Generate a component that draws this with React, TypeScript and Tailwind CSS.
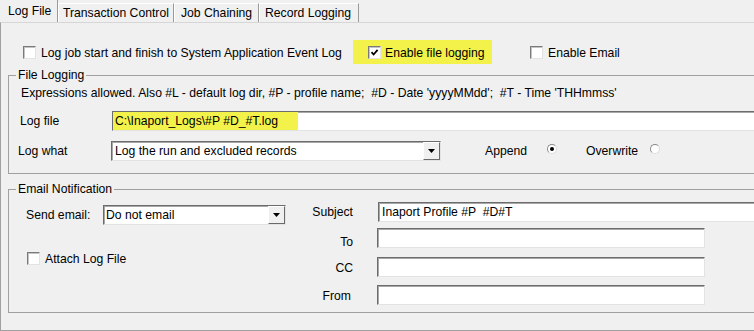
import React from "react";

function Check({ checked = false }: { checked?: boolean }) {
  return (
    <span className="w-[13px] h-[13px] shrink-0 bg-white border border-t-[#7a7a7a] border-l-[#7a7a7a] border-b-[#e3e3e3] border-r-[#e3e3e3] shadow-[inset_1px_1px_0_#c4c4c4] flex items-center justify-center">
      {checked && (
        <svg width="9" height="9" viewBox="0 0 9 9">
          <path d="M1.5 4.2 L3.6 6.5 L7.6 1.8" fill="none" stroke="#000" strokeWidth="1.8" />
        </svg>
      )}
    </span>
  );
}

function Radio({ checked = false }: { checked?: boolean }) {
  return (
    <span className="w-[10px] h-[10px] shrink-0 rounded-full bg-white border border-t-[#8a8a8a] border-l-[#8a8a8a] border-b-[#dcdcdc] border-r-[#dcdcdc] flex items-center justify-center mb-[4px]">
      {checked && <span className="w-[4px] h-[4px] rounded-full bg-black" />}
    </span>
  );
}

function DropBtn() {
  return (
    <span className="w-[17px] h-full shrink-0 bg-[#f0f0f0] border border-t-white border-l-white border-b-[#6a6a6a] border-r-[#6a6a6a] flex items-center justify-center">
      <svg width="7" height="4" viewBox="0 0 7 4">
        <polygon points="0,0 7,0 3.5,4" fill="#000" />
      </svg>
    </span>
  );
}

const sunken =
  "h-[20px] bg-white border border-t-[#6c6c6c] border-l-[#6c6c6c] border-b-[#e3e3e3] border-r-[#e3e3e3] shadow-[inset_1px_1px_0_#a8a8a8] flex items-center";

export default function App() {
  return (
    <div className="w-[754px] h-[331px] overflow-hidden bg-[#f0f0f0] text-[12.2px] leading-[15px] text-black font-['Liberation_Sans',Arial,sans-serif]">
      {/* Tabs */}
      <div className="flex h-[22px] items-end">
        <div className="h-[22px] w-[58px] pl-[8px] pt-[4px] border-r border-r-[#9a9a9a]">Log File</div>
        <div className="h-[19px] w-[116px] pl-[4px] pt-[2px] border-t border-l border-r border-t-white border-l-white border-r-[#9a9a9a] whitespace-nowrap">
          Transaction Control
        </div>
        <div className="h-[19px] w-[85px] pl-[6px] pt-[2px] border-t border-l border-r border-t-white border-l-white border-r-[#9a9a9a] whitespace-nowrap">
          Job Chaining
        </div>
        <div className="h-[19px] w-[100px] pl-[5px] pt-[2px] border-t border-l border-r border-t-white border-l-white border-r-[#9a9a9a] whitespace-nowrap">
          Record Logging
        </div>
      </div>

      {/* Panel */}
      <div className="h-[309px] border-t border-l border-b border-t-[#d6d6d6] border-l-[#a0a0a0] border-b-[#a0a0a0]">
        {/* Checkbox row */}
        <div className="mt-[17px] h-[24px] flex items-center">
          <div className="ml-[22px] w-[330px] flex items-center gap-[5px] whitespace-nowrap">
            <Check />
            <span className="pt-[2px]">Log job start and finish to System Application Event Log</span>
          </div>
          <div className="w-[139px] h-[24px] bg-[#f2f24b] flex items-center pl-[15px] gap-[4px] whitespace-nowrap">
            <Check checked />
            <span className="pt-[2px]">Enable file logging</span>
          </div>
          <div className="ml-[38px] flex items-center gap-[5px] whitespace-nowrap">
            <Check />
            <span className="pt-[2px]">Enable Email</span>
          </div>
        </div>

        {/* File Logging */}
        <fieldset className="ml-[7px] mt-[4px] w-[770px] h-[106px] border border-[#a0a0a0]">
          <legend className="ml-[7px] px-[2px] leading-[14px]">File Logging</legend>
          <div className="mt-[4px] ml-[12px] whitespace-pre">
            Expressions allowed. Also #L - default log dir, #P - profile name;  #D - Date 'yyyyMMdd';  #T - Time 'THHmmss'
          </div>
          <div className="mt-[10px] h-[20px] flex items-center">
            <span className="ml-[11px] w-[92px] shrink-0">Log file</span>
            <div className={sunken + " flex-1"}>
              <span className="h-full w-[185px] bg-[#f2f24b] pl-[2px] flex items-center">C:\Inaport_Logs\#P #D_#T.log</span>
            </div>
          </div>
          <div className="mt-[10px] h-[20px] flex items-center">
            <span className="ml-[9px] w-[93px] shrink-0">Log what</span>
            <div className={sunken + " w-[330px] shrink-0"}>
              <span className="flex-1 pl-[3px]">Log the run and excluded records</span>
              <DropBtn />
            </div>
            <span className="ml-[44px] w-[62px] shrink-0">Append</span>
            <Radio checked />
            <span className="ml-[29px] w-[64px] shrink-0">Overwrite</span>
            <Radio />
          </div>
        </fieldset>

        {/* Email Notification */}
        <fieldset className="ml-[7px] mt-[8px] w-[770px] h-[131px] border border-[#a0a0a0]">
          <legend className="ml-[7px] px-[2px] leading-[14px]">Email Notification</legend>
          <div className="flex">
            <div className="flex flex-col shrink-0">
              <div className="mt-[9px] h-[20px] flex items-center">
                <span className="ml-[17px] w-[77px] shrink-0">Send email:</span>
                <div className={sunken + " w-[183px]"}>
                  <span className="flex-1 pl-[2px]">Do not email</span>
                  <DropBtn />
                </div>
              </div>
              <div className="mt-[27px] h-[13px] ml-[18px] flex items-center gap-[5px]">
                <Check />
                <span className="pt-[1px]">Attach Log File</span>
              </div>
            </div>
            <div className="flex-1 flex flex-col">
              <div className="mt-[6px] h-[20px] flex items-center">
                <span className="w-[67px] text-right shrink-0">Subject</span>
                <div className={sunken + " flex-1 ml-[25px]"}>
                  <span className="pl-[3px] whitespace-pre">Inaport Profile #P  #D#T</span>
                </div>
              </div>
              <div className="mt-[6px] h-[20px] flex items-center">
                <span className="w-[67px] text-right shrink-0 pt-[8px]">To</span>
                <div className={sunken + " w-[328px] ml-[24px]"} />
              </div>
              <div className="mt-[9px] h-[20px] flex items-center">
                <span className="w-[67px] text-right shrink-0 pt-[2px]">CC</span>
                <div className={sunken + " w-[328px] ml-[24px]"} />
              </div>
              <div className="mt-[8px] h-[20px] flex items-center">
                <span className="w-[65px] text-right shrink-0 pt-[2px]">From</span>
                <div className={sunken + " w-[328px] ml-[26px]"} />
              </div>
            </div>
          </div>
        </fieldset>
      </div>
    </div>
  );
}
